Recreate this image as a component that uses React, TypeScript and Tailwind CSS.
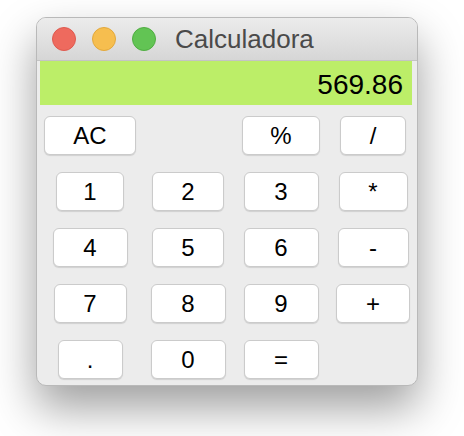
import React from "react";

type B = { label: string; w: number; col: string };

const rows: B[][] = [
  [
    { label: "AC", w: 92, col: "col-start-1" },
    { label: "%", w: 78, col: "col-start-3" },
    { label: "/", w: 66, col: "col-start-4" },
  ],
  [
    { label: "1", w: 68, col: "col-start-1" },
    { label: "2", w: 72, col: "col-start-2" },
    { label: "3", w: 75, col: "col-start-3" },
    { label: "*", w: 69, col: "col-start-4" },
  ],
  [
    { label: "4", w: 75, col: "col-start-1" },
    { label: "5", w: 72, col: "col-start-2" },
    { label: "6", w: 75, col: "col-start-3" },
    { label: "-", w: 71, col: "col-start-4" },
  ],
  [
    { label: "7", w: 73, col: "col-start-1" },
    { label: "8", w: 75, col: "col-start-2" },
    { label: "9", w: 75, col: "col-start-3" },
    { label: "+", w: 74, col: "col-start-4" },
  ],
  [
    { label: ".", w: 65, col: "col-start-1" },
    { label: "0", w: 75, col: "col-start-2" },
    { label: "=", w: 75, col: "col-start-3" },
  ],
];

export default function App() {
  return (
    <div
      className="w-[464px] h-[436px] bg-white pl-[36px] pt-[17px] overflow-hidden"
      style={{ fontFamily: '"Liberation Sans", Arial, sans-serif' }}
    >
      <div className="w-[382px] h-[369px] rounded-[10px] border border-[#b9b9b9] bg-[#ececec] shadow-[0_22px_45px_rgba(0,0,0,0.38)] flex flex-col overflow-hidden">
        <div className="h-[43px] shrink-0 bg-gradient-to-b from-[#ececec] to-[#d6d6d6] border-b border-[#c4c4c4] flex items-center pl-[15px]">
          <div className="w-[24px] h-[24px] rounded-full bg-[#ee6a5e] border border-[#de5a4f]" />
          <div className="w-[24px] h-[24px] rounded-full bg-[#f6be4f] border border-[#e2a83c] ml-[16px]" />
          <div className="w-[24px] h-[24px] rounded-full bg-[#62c454] border border-[#50ad42] ml-[16px]" />
          <div className="ml-[19px] text-[26px] leading-none text-[#4a4a4a] pb-[1px]">Calculadora</div>
        </div>
        <div className="ml-[3px] mr-[5px] h-[44px] bg-[#bcee68] flex items-center justify-end pr-[9px] pt-[3px] text-[28px] leading-none text-black">
          569.86
        </div>
        <div className="grid grid-cols-[106px_90px_96px_88px] auto-rows-[39px] gap-y-[17px] mt-[11px]">
          {rows.map((r, i) =>
            r.map((b) => (
              <div
                key={i + b.label}
                className={`${b.col} flex justify-center`}
                style={{ gridRow: i + 1 }}
              >
                <button
                  className="h-[39px] rounded-[6px] bg-white border border-[#cbcbcb] shadow-[0_1px_1px_rgba(0,0,0,0.12)] text-[24px] leading-none text-black flex items-center justify-center"
                  style={{ width: b.w }}
                >
                  {b.label}
                </button>
              </div>
            ))
          )}
        </div>
      </div>
    </div>
  );
}
